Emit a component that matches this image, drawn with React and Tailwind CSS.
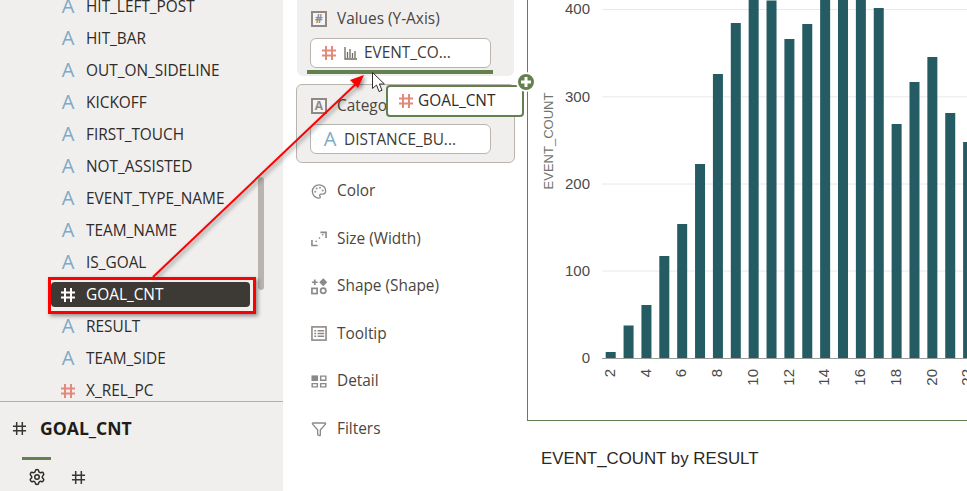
import { Settings, Palette, Funnel } from 'lucide-react';

const fields = [
  { type: 'A', name: 'HIT_LEFT_POST' },
  { type: 'A', name: 'HIT_BAR' },
  { type: 'A', name: 'OUT_ON_SIDELINE' },
  { type: 'A', name: 'KICKOFF' },
  { type: 'A', name: 'FIRST_TOUCH' },
  { type: 'A', name: 'NOT_ASSISTED' },
  { type: 'A', name: 'EVENT_TYPE_NAME' },
  { type: 'A', name: 'TEAM_NAME' },
  { type: 'A', name: 'IS_GOAL' },
  { type: '#', name: 'GOAL_CNT', selected: true },
  { type: 'A', name: 'RESULT' },
  { type: 'A', name: 'TEAM_SIDE' },
  { type: '#', name: 'X_REL_PC' },
];

// top edge of each bar, in page pixels (label 2 to 22)
const barTops = [352, 325.5, 305, 256, 224, 164, 74, 23, -5, 0.5, 39, 24, -5, -5, -5, 8, 124, 82, 57, 113, 142];

function Hash({ className, size = 16, strokeWidth = 2 }) {
  return (
    <svg width={size} height={size} viewBox="0 0 16 16" className={className} fill="none" stroke="currentColor" strokeWidth={strokeWidth}>
      <path d="M5 1v14M11 1v14M1 5.5h14M1 10.5h14" />
    </svg>
  );
}

function LetterA({ className = '' }) {
  return <span className={`-mt-[2px] w-4 text-center text-[20px] font-medium leading-none text-[#7fabc4] ${className}`}>A</span>;
}

function FieldRow({ field }) {
  return (
    <div className={`flex h-8 items-center ${field.selected ? 'relative' : ''}`}>
      {field.selected && <div className="absolute left-[51px] right-[33px] top-[3px] h-[25px] rounded bg-[#3d3a35]" />}
      <div className="relative flex items-center pl-[60px]">
        {field.type === 'A' ? <LetterA /> : <Hash className={field.selected ? 'text-white' : 'text-[#e2897b]'} />}
        <span className={`ml-[10px] text-[15.4px] ${field.selected ? 'text-white' : 'text-[#2f2c28]'}`}>{field.name}</span>
      </div>
    </div>
  );
}

function SideBar() {
  return (
    <div className="flex h-[491px] w-[283px] shrink-0 flex-col bg-[#f1efee]">
      <div className="h-[402px] shrink-0 overflow-hidden border-b border-[#b5b0ab]">
        <div className="-mt-[9px]">
          {fields.map((f) => <FieldRow key={f.name} field={f} />)}
        </div>
      </div>
      <div className="flex h-6 items-center gap-[13px] pl-[12px] mt-[14px]">
        <Hash className="text-[#3a3733]" size={15} strokeWidth={1.6} />
        <span className="text-[17.6px] font-bold text-[#1f1d1a]">GOAL_CNT</span>
      </div>
      <div className="ml-[22px] mt-[17px] h-[3px] w-[29px] bg-[#64804f]" />
      <div className="flex items-center gap-[25px] pl-[28px] pt-[8px]">
        <Settings size={18} strokeWidth={2} className="text-[#2f2c28]" />
        <Hash className="text-[#3a3733]" size={15} strokeWidth={1.6} />
      </div>
    </div>
  );
}

function Boxed({ children }) {
  return (
    <span className="flex h-4 w-4 items-center justify-center border-2 border-[#8e8985] bg-[#f6f5f4] text-[12px] font-bold leading-none text-[#8e8985]">
      {children}
    </span>
  );
}

function SizeIcon() {
  return (
    <svg width="17" height="17" viewBox="0 0 17 17" fill="none" stroke="#8e8985" strokeWidth="1.7">
      <path d="M1 10v6h6M10 2h6v6M5 12l1-1M8.5 8.5l1-1M12 5l1-1" />
    </svg>
  );
}

function ShapeIcon() {
  return (
    <svg width="17" height="17" viewBox="0 0 17 17" fill="none" stroke="#8e8985" strokeWidth="1.8">
      <path d="M4 1v6M1 4h6" />
      <path d="M13 1l3 3-3 3-3-3z" fill="#8e8985" />
      <rect x="1" y="10.5" width="5.5" height="5.5" />
      <circle cx="13" cy="13" r="2.8" />
    </svg>
  );
}

function TooltipIcon() {
  return (
    <svg width="17" height="17" viewBox="0 0 17 17" fill="none" stroke="#8e8985" strokeWidth="1.7">
      <rect x="1" y="1.5" width="15" height="14" />
      <path d="M3.5 5.5h2M7 5.5h7M3.5 8.5h2M7 8.5h7M3.5 11.5h2M7 11.5h7" />
    </svg>
  );
}

function DetailIcon() {
  return (
    <svg width="17" height="17" viewBox="0 0 17 17" fill="#8e8985">
      <rect x="0.5" y="2" width="7" height="6" />
      <path d="M9.5 2h7v6h-7zM11 3.5v3h4v-3z" fillRule="evenodd" />
      <path d="M0.5 10h7v5h-7zM2 11.5v2h4v-2z" fillRule="evenodd" />
      <path d="M9.5 10h7v5h-7zM11 11.5v2h4v-2z" fillRule="evenodd" />
    </svg>
  );
}

function BarsIcon() {
  return (
    <svg width="14" height="14" viewBox="0 0 14 14" fill="none" stroke="#6f6a64" strokeWidth="1.3">
      <path d="M1 1v12h12M3.5 12V6M6 12V3M8.5 12V7M11 12V5" />
    </svg>
  );
}

function Pill({ children, className = '' }) {
  return (
    <div className={`ml-[13px] flex h-[30px] w-[181px] items-center rounded-md border border-[#b9b4af] bg-white text-[15.4px] text-[#3f3b36] ${className}`}>
      {children}
    </div>
  );
}

function GrammarRow({ icon, label }) {
  return (
    <div className="flex h-[47.5px] items-center gap-[10px] pl-[14px] text-[15.4px] text-[#4a4640]">
      <span className="flex w-4 justify-center">{icon}</span>
      <span>{label}</span>
    </div>
  );
}

function Grammar() {
  return (
    <div className="h-[491px] w-[244px] shrink-0 pl-[14px]">
      <div className="h-[76px] w-[217px] rounded-b-md bg-[#f1efee]">
        <div className="flex h-[38px] items-center gap-[10px] pl-[14px] text-[15.4px] text-[#4a4640]">
          <Boxed>#</Boxed>
          <span>Values (Y-Axis)</span>
        </div>
        <Pill>
          <Hash className="ml-[10px] text-[#e2897b]" />
          <span className="ml-[7px]"><BarsIcon /></span>
          <span className="ml-[6px]">EVENT_CO...</span>
        </Pill>
        <div className="ml-[10px] mt-[2px] h-1 w-[186px] bg-[#64804f]" />
      </div>
      <div className="-ml-px mt-2 h-[79px] w-[219px] rounded-md border border-[#b9b4af] bg-[#f1efee]">
        <div className="flex h-[39px] items-center gap-[10px] pl-[14px] pt-[2px] text-[15.4px] text-[#4a4640]">
          <Boxed>A</Boxed>
          <span>Category (X-Axis)</span>
        </div>
        <Pill className="pt-px">
          <LetterA className="ml-[11px]" />
          <span className="ml-[6px]">DISTANCE_BU...</span>
        </Pill>
      </div>
      <div className="mt-[4.25px]">
        <GrammarRow icon={<Palette size={17} strokeWidth={2} className="text-[#8e8985]" />} label="Color" />
        <GrammarRow icon={<SizeIcon />} label="Size (Width)" />
        <GrammarRow icon={<ShapeIcon />} label="Shape (Shape)" />
        <GrammarRow icon={<TooltipIcon />} label="Tooltip" />
        <GrammarRow icon={<DetailIcon />} label="Detail" />
        <GrammarRow icon={<Funnel size={18} strokeWidth={2} className="text-[#8e8985]" />} label="Filters" />
      </div>
    </div>
  );
}

function Chart() {
  const font = '"Liberation Sans", Arial, sans-serif';
  return (
    <svg width="439" height="420" viewBox="528 0 439 420" className="block">
      {[271, 184, 96.8, 9.5].map((y) => (
        <line key={y} x1="602" x2="967" y1={y} y2={y} stroke="#e6e8ea" strokeWidth="1" />
      ))}
      {barTops.map((top, i) => (
        <rect key={i} x={605.7 + i * 17.87} y={top} width="10" height={358 - top} fill="#255c63" />
      ))}
      <line x1="602" x2="967" y1="358.5" y2="358.5" stroke="#9a9a9a" strokeWidth="1" />
      {[['0', 362.5], ['100', 276], ['200', 189], ['300', 102], ['400', 13.5]].map(([t, y]) => (
        <text key={t} x="590" y={y} textAnchor="end" fontSize="15" fontFamily={font} fill="#4b4b4b">{t}</text>
      ))}
      {[2, 4, 6, 8, 10, 12, 14, 16, 18, 20, 22].map((n) => {
        const x = 615 + (n - 2) * 17.87;
        return (
          <text key={n} x={x} y="369" textAnchor="end" fontSize="15" fontFamily={font} fill="#4b4b4b" transform={`rotate(-90 ${x} 369)`}>{n}</text>
        );
      })}
      <text x="553" y="141" textAnchor="middle" fontSize="13" fontFamily={font} fill="#6f756c" transform="rotate(-90 553 141)">EVENT_COUNT</text>
    </svg>
  );
}

function DragOverlay() {
  return (
    <>
      <svg width="967" height="491" className="pointer-events-none absolute left-0 top-0 drop-shadow-[2px_2px_2px_rgba(0,0,0,0.45)]">
        <line x1="153" y1="277" x2="358" y2="82" stroke="#f00" strokeWidth="2" />
        <path d="M364 75L358 88L350 80z" fill="#f00" />
      </svg>
      <div className="absolute left-[48px] top-[277px] h-[37px] w-[208px] border-[3px] border-[#f00] shadow-[2px_2px_4px_rgba(0,0,0,0.4)]" />
      <div className="absolute left-[386px] top-[85px] flex h-[32px] w-[138px] items-center rounded-[4px] border-2 border-[#64804f] bg-white pl-[10px] text-[15.4px] text-[#2f2c28]">
        <Hash className="text-[#e2897b]" />
        <span className="ml-[4px]">GOAL_CNT</span>
      </div>
      <div className="absolute left-[516px] top-[72px] flex h-5 w-5 items-center justify-center rounded-full border-2 border-white bg-[#64804f]">
        <svg width="12" height="12" viewBox="0 0 12 12" stroke="#fff" strokeWidth="3"><path d="M6 1v10M1 6h10" /></svg>
      </div>
      <svg width="13" height="21" viewBox="0 0 13 21" className="absolute left-[372px] top-[72px]">
        <path d="M0.5 0.5v16l4-3.5 2.5 6.5 3-1.2-2.6-6.3h5z" fill="#fff" stroke="#33302c" strokeWidth="1" />
      </svg>
    </>
  );
}

export default function App() {
  return (
    <div className="relative flex h-[491px] w-[967px] overflow-hidden bg-white font-['Open_Sans',sans-serif]">
      <SideBar />
      <Grammar />
      <div className="min-w-0 flex-1">
        <div className="h-[421px] border-b border-l border-[#64804f]">
          <Chart />
        </div>
        <div className="pl-[14px] pt-[26px] font-['Liberation_Sans',sans-serif] text-[16.85px] leading-[24px] text-[#2b2824]">
          EVENT_COUNT by RESULT
        </div>
      </div>
      <div className="absolute left-[258px] top-[177px] h-[113px] w-[6px] rounded-sm bg-[#b9b4af]" />
      <DragOverlay />
    </div>
  );
}
